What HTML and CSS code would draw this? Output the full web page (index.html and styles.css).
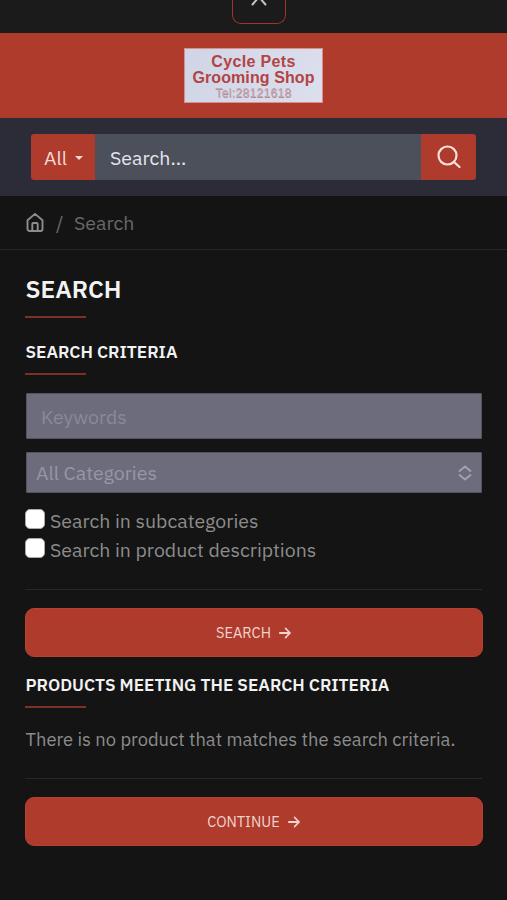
FILE: index.html
```html
<!DOCTYPE html>
<html lang="en">
<head>
<meta charset="utf-8">
<title>Search</title>
<link rel="stylesheet" href="styles.css">
</head>
<body>
<div class="topbar">
  <div class="top-toggle">
    <svg width="18" height="18" viewBox="0 0 18 18"><path d="M2.500 15.500 9 8l6.500 7.500M9 8V0"/></svg>
  </div>
</div>
<header class="brand">
  <div class="logo">
    <span class="logo-name">Cycle Pets</span>
    <span class="logo-name logo-shop">Grooming Shop</span>
    <span class="logo-tel">Tel:28121618</span>
  </div>
</header>
<div class="searchbar">
  <div class="search-category"><span class="t-all">All</span><i class="caret"></i></div>
  <div class="search-input"><span class="t-placeholder">Search...</span></div>
  <div class="search-button">
    <svg width="26" height="26" viewBox="0 0 26 26"><circle cx="11.500" cy="11.500" r="9"/><path d="m18 18 5.500 5"/></svg>
  </div>
</div>
<nav class="breadcrumb">
  <svg width="18" height="20" viewBox="0 0 18 20"><path d="M1.500 7.300 9 .9l7.500 6.400V16a2 2 0 0 1-2 2h-11a2 2 0 0 1-2-2zM6.300 18v-7a1 1 0 0 1 1-1h3.400a1 1 0 0 1 1 1v7"/></svg>
  <span class="slash">/</span>
  <span class="t-crumb">Search</span>
</nav>
<main>
  <h1><span>SEARCH</span></h1>
  <h2><span class="t-criteria">SEARCH CRITERIA</span></h2>
  <div class="field keywords"><span class="t-keywords">Keywords</span></div>
  <div class="field categories"><span class="t-categories">All Categories</span>
    <svg width="14" height="16" viewBox="0 0 14 16"><path d="m1.500 6 5.500-4.500L12.500 6M1.500 10l5.500 4.500 5.500-4.500"/></svg>
  </div>
  <div class="check"><i class="box"></i><span class="t-sub">Search in subcategories</span></div>
  <div class="check check-second"><i class="box"></i><span class="t-desc">Search in product descriptions</span></div>
  <div class="actions">
    <div class="button"><span class="t-btn">SEARCH</span><svg width="12" height="12" viewBox="0 0 12 12"><path d="M.8 6H11M6.700 1.500 11 6l-4.300 4.500"/></svg></div>
  </div>
  <h2 class="results"><span class="t-products">PRODUCTS MEETING THE SEARCH CRITERIA</span></h2>
  <p><span class="t-empty">There is no product that matches the search criteria.</span></p>
  <div class="actions actions-last">
    <div class="button"><span class="t-continue">CONTINUE</span><svg width="12" height="12" viewBox="0 0 12 12"><path d="M.8 6H11M6.700 1.500 11 6l-4.300 4.500"/></svg></div>
  </div>
</main>
</body>
</html>
```
FILE: styles.css
```css
* { box-sizing: border-box; }
body {
  margin: 0;
  height: 900px;
  overflow: hidden;
  background: #141414;
  color: #8c8c8c;
  font-family: "IBM Plex Sans", "Noto Sans", sans-serif;
  font-size: 19.500px;
  line-height: 28px;
}
span { white-space: nowrap; }
svg { display: block; flex: none; fill: none; stroke: currentColor; stroke-width: 2; stroke-linecap: round; stroke-linejoin: round; }
.topbar { height: 33px; background: #1b1b1b; display: flex; justify-content: center; padding-left: 11px; }
.top-toggle { width: 54px; height: 24px; border: 1.500px solid #9f3629; border-top: 0; border-radius: 0 0 9px 9px; display: flex; justify-content: center; align-items: flex-start; color: #c4c4c4; overflow: hidden; }
.top-toggle svg { margin-top: -11px; }
.brand { height: 85px; background: #ae3b2c; display: flex; justify-content: center; padding-top: 15px; }
.logo { width: 139px; height: 55px; background: linear-gradient(110deg, #d0d5e7, #dcdfec); border: 1px solid #d88f8d; display: flex; flex-direction: column; align-items: center; padding-top: 5px; font-family: "Liberation Sans", sans-serif; }
.logo-name { font-size: 16px; line-height: 16px; font-weight: bold; color: #b34345; letter-spacing: .35px; }
.logo-shop { letter-spacing: .1px; }
.logo-tel { font-size: 12px; line-height: 14px; color: #c2a7b4; text-shadow: .5px .5px #b58c98; letter-spacing: .35px; }
.searchbar { height: 78px; background: #2c2c38; padding: 16px 31px; display: flex; }
.search-category { width: 64px; height: 46px; background: #ae3b2c; border-radius: 3px 0 0 3px; color: #f5dcd8; display: flex; align-items: center; padding: 1px 0 0 13px; gap: 7px; }
.t-all { width: 24px; }
.caret { border: 4px solid transparent; border-top-color: currentColor; border-bottom: 0; }
.search-input { flex: 1; height: 46px; background: #4c505b; color: #e5e6ee; display: flex; align-items: center; padding: 1px 0 0 15px; }
.search-button { width: 55px; height: 46px; background: #ae3b2c; border-radius: 0 3px 3px 0; color: #f9e2dd; display: flex; align-items: center; justify-content: center; }
.search-button svg { stroke-width: 2.200; }
.breadcrumb { height: 54px; border-bottom: 1px solid #25252e; display: flex; align-items: center; padding: 1px 0 0 26px; color: #686868; }
.breadcrumb svg { color: #8d8d8d; stroke-width: 1.900; }
.slash { width: 8px; margin: 0 10px 0 12px; }
main { padding: 24px 25px 0; }
h1, h2 { margin: 0; color: #f2f2f2; font-weight: 600; }
h1::after, h2::after { content: ""; display: block; width: 61px; height: 2px; background: #7f3026; }
h1 { font-size: 24.600px; line-height: 30px; height: 44px; }
h1::after { margin-top: 12px; }
h2 { font-size: 17.300px; line-height: 24px; margin-top: 22px; height: 36px; }
h2::after { margin-top: 9px; }
.field { margin-left: 1px; width: 456px; background: #6d6c7d; border: 1px solid #555362; border-radius: 1px; display: flex; align-items: center; color: #8b8995; }
.keywords { height: 46px; margin-top: 17px; padding: 1px 0 0 14px; }
.categories { height: 41px; margin-top: 13px; padding: 0 9px; justify-content: space-between; color: #9896a2; }
.categories svg { stroke-width: 1.800; color: #a5a3af; }
.check { height: 29px; margin-top: 13px; display: flex; align-items: center; gap: 5px; }
.check-second { margin-top: 0; }
.box { width: 20px; height: 20px; background: #fff; border: 1px solid #aaa; border-radius: 5px; margin-top: -4px; }
.actions { border-top: 1px solid #27282b; margin-top: 25px; padding-top: 18px; }
.button { height: 49px; width: 458px; border-radius: 9px; background: #ae3b2c; border: 1px solid #b8402f; color: #f1d4ce; display: flex; align-items: center; justify-content: center; gap: 8px; font-size: 14.600px; padding: 1px 1px 0 0; }
.button svg { stroke-width: 1.800; }
.results { margin-top: 16px; }
.t-criteria, .t-products, .t-empty, h1 span { padding-left: .5px; }
p { margin: 16px 0 0; font-size: 18.350px; }
.actions-last { margin-top: 25px; }
```
